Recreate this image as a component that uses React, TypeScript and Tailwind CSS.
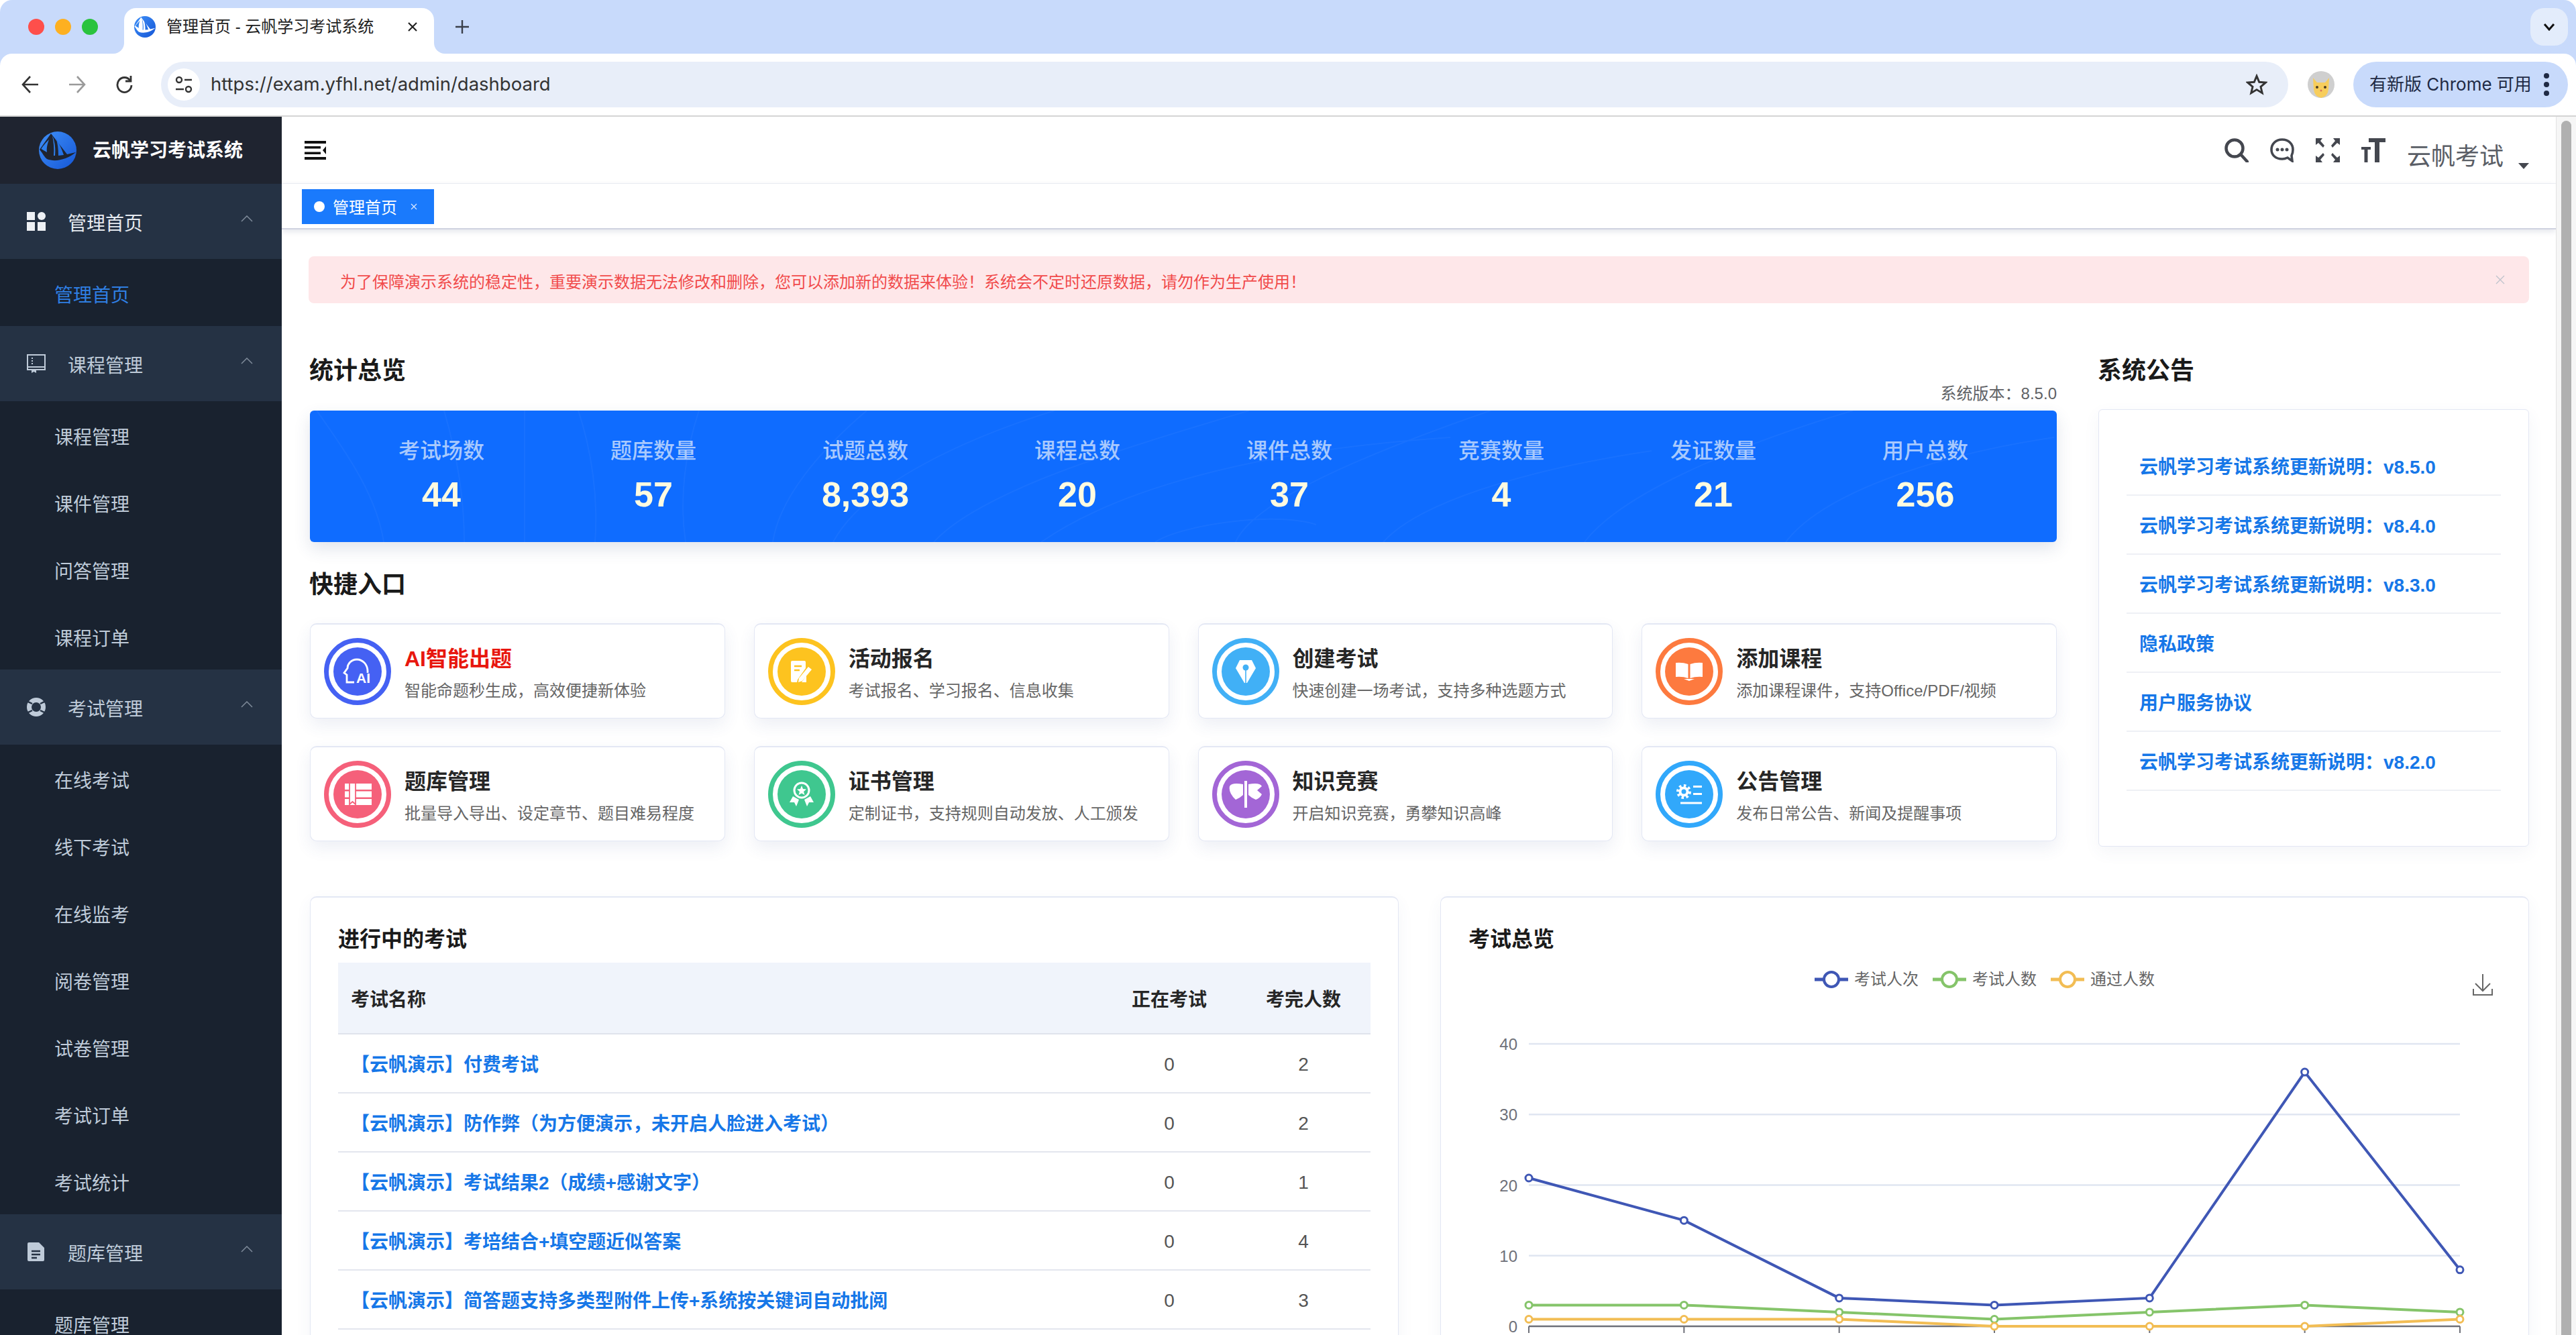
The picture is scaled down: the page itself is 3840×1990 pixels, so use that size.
import { ReactNode } from "react";

const menus = [
  { title: "管理首页", icon: "dash", items: ["管理首页"] },
  { title: "课程管理", icon: "book", items: ["课程管理", "课件管理", "问答管理", "课程订单"] },
  { title: "考试管理", icon: "ring", items: ["在线考试", "线下考试", "在线监考", "阅卷管理", "试卷管理", "考试订单", "考试统计"] },
  { title: "题库管理", icon: "doc", items: ["题库管理"] },
];

const stats = [
  ["考试场数", "44"],
  ["题库数量", "57"],
  ["试题总数", "8,393"],
  ["课程总数", "20"],
  ["课件总数", "37"],
  ["竞赛数量", "4"],
  ["发证数量", "21"],
  ["用户总数", "256"],
];

const notices = [
  "云帆学习考试系统更新说明：v8.5.0",
  "云帆学习考试系统更新说明：v8.4.0",
  "云帆学习考试系统更新说明：v8.3.0",
  "隐私政策",
  "用户服务协议",
  "云帆学习考试系统更新说明：v8.2.0",
];

const exams = [
  ["【云帆演示】付费考试", "0", "2"],
  ["【云帆演示】防作弊（为方便演示，未开启人脸进入考试）", "0", "2"],
  ["【云帆演示】考试结果2（成绩+感谢文字）", "0", "1"],
  ["【云帆演示】考培结合+填空题近似答案", "0", "4"],
  ["【云帆演示】简答题支持多类型附件上传+系统按关键词自动批阅", "0", "3"],
];

function Logo({ size, cut }: { size: number; cut: string }) {
  return (
    <svg width={size} height={size} viewBox="0 0 56 56">
      <defs>
        <linearGradient id="lg" x1="0" y1="0" x2="1" y2="1">
          <stop offset="0" stopColor="#3f90f8" />
          <stop offset="1" stopColor="#1556d6" />
        </linearGradient>
      </defs>
      <circle cx="28" cy="28" r="28" fill="url(#lg)" />
      <path d="M18 3L1 27C6 33 8 38 12 41C24 46 42 42 55 31L42 34Z" fill={cut} />
      <path d="M15 12C9 18 5 23 3.500 26L12 31C11 24 13 18 15 12Z" fill="#2f80ee" />
      <path d="M20 6C24 16 25 26 24 36L22 36C23 26 22 16 20 6Z" fill="#2f80ee" />
      <path d="M25 9C30 17 34 26 37 35L29 36C29 26 28 17 25 9Z" fill="#2572e6" />
    </svg>
  );
}

function MenuIcon({ name }: { name: string }) {
  if (name === "dash")
    return (
      <svg width="28" height="28" viewBox="0 0 28 28" fill="#eef1f5">
        <rect x="0" y="0" width="12" height="12" />
        <circle cx="22" cy="6" r="6" />
        <rect x="0" y="15" width="12" height="13" />
        <rect x="16" y="15" width="12" height="13" />
      </svg>
    );
  if (name === "book")
    return (
      <svg width="28" height="28" viewBox="0 0 28 28" fill="none" stroke="#bfcbd9" strokeWidth="2">
        <path d="M1 1H27V23H1Z" />
        <path d="M1 19H27" />
        <path d="M8 5V16" strokeDasharray="2 2" />
        <path d="M7 23H14V28L10.500 26L7 28Z" fill="#bfcbd9" stroke="none" />
      </svg>
    );
  if (name === "ring")
    return (
      <svg width="28" height="28" viewBox="0 0 28 28" fill="none">
        <circle cx="14" cy="14" r="10.500" stroke="#bfcbd9" strokeWidth="7" />
        <path d="M0 5L8 9M28 5L20 9M0 23L8 19M28 23L20 19" stroke="#253244" strokeWidth="2.500" />
      </svg>
    );
  return (
    <svg width="28" height="28" viewBox="0 0 28 28" fill="#bfcbd9">
      <path d="M3 0H18L26 8V26Q26 28 24 28H3Q1 28 1 26V2Q1 0 3 0Z" />
      <path d="M7 13H20M7 18H20M7 23H15" stroke="#253244" strokeWidth="2.500" />
    </svg>
  );
}

function Caret() {
  return (
    <svg width="18" height="10" viewBox="0 0 18 10" fill="none" stroke="#7f8b9a" strokeWidth="1.500">
      <path d="M1 9L9 1L17 9" />
    </svg>
  );
}

function Sidebar() {
  return (
    <aside className="w-[420px] shrink-0 bg-[#1f2430] overflow-hidden">
      <div className="h-[100px] flex items-center pl-[58px] gap-[24px] bg-[#1f2430]">
        <Logo size={56} cut="#1f2430" />
        <span className="text-[28px] font-semibold text-white leading-none pt-[2px]">云帆学习考试系统</span>
      </div>
      {menus.map((m, i) => (
        <div key={m.title + i}>
          <div className="h-[112px] flex items-center pl-[40px] pr-[43px] bg-[#253244]">
            <MenuIcon name={m.icon} />
            <span className={`ml-[33px] pt-[8px] text-[28px] leading-none ${i === 0 ? "text-[#e6eaf0]" : "text-[#bfcbd9]"}`}>{m.title}</span>
            <span className="ml-auto -mt-[8px] flex">
              <Caret />
            </span>
          </div>
          <div className="bg-[#19222f]">
            {m.items.map((s, j) => (
              <div
                key={s}
                className={`h-[100px] flex items-center pl-[81px] pt-[10px] text-[28px] leading-none ${i === 0 && j === 0 ? "text-[#2f7fe3]" : "text-[#bfcbd9]"}`}
              >
                {s}
              </div>
            ))}
          </div>
        </div>
      ))}
    </aside>
  );
}

function ChromeBar() {
  return (
    <div className="bg-[#c8dafb] rounded-t-[18px]">
      <div className="h-[80px] flex items-end relative">
        <div className="flex items-center gap-[16px] pl-[42px] pr-[39px] h-[80px]">
          <span className="w-[24px] h-[24px] rounded-full bg-[#fe4f4b]" />
          <span className="w-[24px] h-[24px] rounded-full bg-[#fdb021]" />
          <span className="w-[24px] h-[24px] rounded-full bg-[#2ac33e]" />
        </div>
        <div className="relative w-[462px] h-[68px] bg-white rounded-t-[18px] flex items-center pl-[15px]">
          <span className="absolute -left-[16px] bottom-0 w-[16px] h-[16px] bg-white">
            <span className="block w-[16px] h-[16px] bg-[#c8dafb] rounded-br-[16px]" />
          </span>
          <span className="absolute -right-[16px] bottom-0 w-[16px] h-[16px] bg-white">
            <span className="block w-[16px] h-[16px] bg-[#c8dafb] rounded-bl-[16px]" />
          </span>
          <div className="-mt-[12px] flex items-center">
            <Logo size={32} cut="#ffffff" />
            <span className="ml-[16px] text-[24px] leading-none text-[#222] whitespace-pre">管理首页 - 云帆学习考试系统</span>
            <svg className="ml-[50px]" width="16" height="16" viewBox="0 0 16 16" stroke="#222" strokeWidth="2.200">
              <path d="M2 2L14 14M14 2L2 14" />
            </svg>
          </div>
        </div>
        <svg className="absolute left-[679px] top-[30px]" width="20" height="20" viewBox="0 0 20 20" stroke="#3a3f4a" strokeWidth="2.400">
          <path d="M10 0V20M0 10H20" />
        </svg>
        <div className="absolute right-[12px] top-[12px] w-[56px] h-[56px] rounded-[20px] bg-[#e3ecfb] flex items-center justify-center">
          <svg width="18" height="12" viewBox="0 0 18 12" fill="none" stroke="#111" strokeWidth="3">
            <path d="M2 2L9 10L16 2" />
          </svg>
        </div>
      </div>
      <div className="h-[92px] bg-white rounded-t-[18px] flex items-center">
        <div className="w-[240px] shrink-0 flex items-center justify-between pl-[32px] pr-[42px]">
          <svg width="26" height="28" viewBox="0 0 26 28" fill="none" stroke="#333" strokeWidth="2.600">
            <path d="M25 14H2M13 2L2 14L13 26" />
          </svg>
          <svg width="26" height="28" viewBox="0 0 26 28" fill="none" stroke="#9a9a9a" strokeWidth="2.600">
            <path d="M1 14H24M13 2L24 14L13 26" />
          </svg>
          <svg width="26" height="28" viewBox="0 0 26 28" fill="none" stroke="#333" strokeWidth="2.800">
            <path d="M22 8A10.500 11 0 1 0 24 15" />
            <path d="M23 1V9H15" />
          </svg>
        </div>
        <div className="flex-1 h-[68px] rounded-full bg-[#e8eef9] flex items-center pl-[10px] pr-[31px]">
          <div className="w-[48px] h-[48px] rounded-full bg-white flex items-center justify-center">
            <svg width="26" height="26" viewBox="0 0 26 26" fill="none" stroke="#333" strokeWidth="2.400">
              <circle cx="6" cy="6" r="4" />
              <path d="M14 6H25M1 20H13" />
              <circle cx="20" cy="20" r="4" />
            </svg>
          </div>
          <span className="ml-[16px] text-[27.500px] leading-none text-[#333] font-['Inter','Liberation_Sans',sans-serif]">https://exam.yfhl.net/admin/dashboard</span>
          <svg className="ml-auto" width="32" height="32" viewBox="0 0 24 24" fill="none" stroke="#333" strokeWidth="2.200">
            <path d="M12 2.500L14.800 9.200L22 9.800L16.500 14.500L18.200 21.500L12 17.700L5.800 21.500L7.500 14.500L2 9.800L9.200 9.200Z" />
          </svg>
        </div>
        <div className="w-[97px] shrink-0 flex justify-center">
          <svg width="40" height="40" viewBox="0 0 40 40">
            <circle cx="20" cy="20" r="20" fill="#cfcfcf" />
            <path d="M8 10L14 17H26L32 10L31 27Q30 38 20 40Q10 38 9 27Z" fill="#f7cd5c" />
            <circle cx="14" cy="24" r="2" fill="#4a3a20" />
            <circle cx="26" cy="24" r="2" fill="#4a3a20" />
            <circle cx="20" cy="29" r="1.500" fill="#d9775a" />
          </svg>
        </div>
        <div className="w-[320px] h-[68px] shrink-0 mr-[12px] rounded-full bg-[#c8dafb] flex items-center pl-[24px]">
          <span className="text-[26px] leading-none text-[#1f2a44] whitespace-pre font-['Inter','Noto_Sans_CJK_SC',sans-serif]">有新版 Chrome 可用</span>
          <span className="ml-auto mr-[28px] flex flex-col gap-[5px]">
            <i className="block w-[8px] h-[8px] rounded-full bg-[#1f2a44]" />
            <i className="block w-[8px] h-[8px] rounded-full bg-[#1f2a44]" />
            <i className="block w-[8px] h-[8px] rounded-full bg-[#1f2a44]" />
          </span>
        </div>
      </div>
      <div className="h-[2px] bg-[#d4d4d4]" />
    </div>
  );
}

function NavIcons() {
  return (
    <div className="flex items-center gap-[32px]">
      <svg width="36" height="36" viewBox="0 0 36 36" fill="none" stroke="#44474f" strokeWidth="4.500">
        <circle cx="15" cy="15" r="12.500" />
        <path d="M24 24L34 35" strokeLinecap="round" />
      </svg>
      <svg width="36" height="36" viewBox="0 0 36 36" fill="none">
        <path d="M18 2C8 2 2 9 2 17C2 25 8 31 18 31C21 31 24 30 26 29L33 34L32 26C33 24 34 21 34 17C34 9 28 2 18 2Z" stroke="#44474f" strokeWidth="3.600" />
        <circle cx="11" cy="17" r="2.500" fill="#44474f" />
        <circle cx="18" cy="17" r="2.500" fill="#44474f" />
        <circle cx="25" cy="17" r="2.500" fill="#44474f" />
      </svg>
      <svg width="36" height="36" viewBox="0 0 36 36" fill="#44474f">
        <path d="M0 0H10L7 4L13 11L11 14L4 7L0 10Z" />
        <path d="M36 0H26L29 4L23 11L25 14L32 7L36 10Z" />
        <path d="M0 36H10L7 32L13 25L11 22L4 29L0 26Z" />
        <path d="M36 36H26L29 32L23 25L25 22L32 29L36 26Z" />
      </svg>
      <svg width="36" height="36" viewBox="0 0 36 36" fill="#44474f">
        <path d="M11 0H36V6H27V36H20V6H11Z" />
        <path d="M0 13H14V17H9.500V36H4.500V17H0Z" />
      </svg>
    </div>
  );
}

function Navbar() {
  return (
    <>
      <div className="h-[100px] flex items-center pl-[34px] pr-[40px] border-b border-[#eef0f4]">
        <svg width="32" height="28" viewBox="0 0 32 28" fill="#111">
          <rect x="0" y="0" width="32" height="4" />
          <rect x="0" y="8" width="24" height="3.500" />
          <rect x="0" y="16.500" width="24" height="3.500" />
          <rect x="0" y="24" width="32" height="4" />
          <path d="M32 8V20L27 14Z" />
        </svg>
        <div className="ml-auto flex items-center">
          <NavIcons />
          <span className="ml-[32px] text-[36px] leading-none text-[#5a5e66] mt-[20px]">云帆考试</span>
          <svg className="ml-[22px] mt-[47px]" width="16" height="9" viewBox="0 0 16 9" fill="#44474f">
            <path d="M0 0H16L8 9Z" />
          </svg>
        </div>
      </div>
      <div className="h-[68px] relative z-10 flex items-center pl-[30px] pt-[2px] border-b-2 border-[#d0d3e0] shadow-[0_3px_8px_rgba(60,70,110,0.14)] bg-white">
        <div className="h-[52px] w-[197px] bg-[#1a7afc] flex items-center pl-[18px] text-white">
          <span className="w-[16px] h-[16px] rounded-full bg-white" />
          <span className="ml-[12px] pt-[4px] text-[24px] leading-none">管理首页</span>
          <svg className="ml-[20px]" width="10" height="10" viewBox="0 0 10 10" stroke="#dbe9ff" strokeWidth="1.200">
            <path d="M1 1L9 9M9 1L1 9" />
          </svg>
        </div>
      </div>
    </>
  );
}

function Heading({ children }: { children: ReactNode }) {
  return <h2 className="h-[44px] -ml-[1px] pt-[6px] flex items-center text-[36px] font-bold leading-none text-[#1a1a1a]">{children}</h2>;
}

function StatsCard() {
  return (
    <div className="relative h-[196px] rounded-[6px] bg-[#0f6cff] overflow-hidden grid grid-cols-8 px-[38px] pt-[36px] shadow-[0_10px_24px_rgba(50,70,120,0.14)]">
      <svg className="absolute inset-0" width="2606" height="196" viewBox="0 0 2606 196" fill="none" stroke="#ffffff" strokeOpacity="0.04" strokeWidth="2">
        <path d="M10 0C60 70 100 130 110 196M200 0C220 70 230 130 230 196M320 0V196M400 0C420 60 430 130 425 196M580 0C560 60 550 130 560 196M830 0C760 60 700 130 690 196M1110 0C950 50 820 120 780 196M1400 0C1200 60 1000 120 930 196M1700 40C1400 60 1200 120 1090 196M1500 170C1440 150 1300 170 1260 196M1760 0C1500 90 1400 150 1380 196M2000 60C1800 90 1650 140 1600 196M2300 0C2100 60 1950 130 1900 196M2600 40C2400 70 2250 130 2200 196" />
      </svg>
      {stats.map(([label, value]) => (
        <div key={label} className="relative text-center">
          <div className="h-[44px] pt-[4px] flex items-center justify-center text-[32px] leading-none text-[#a8c9fd] font-medium">{label}</div>
          <div className="mt-[15px] h-[60px] flex items-center justify-center text-[52px] leading-none font-bold text-[#fffbe0]">{value}</div>
        </div>
      ))}
    </div>
  );
}

const shortcuts = [
  { title: "AI智能出题", desc: "智能命题秒生成，高效便捷新体验", ring: "border-[#4561f3]", disc: "bg-[#4561f3]", icon: "ai" },
  { title: "活动报名", desc: "考试报名、学习报名、信息收集", ring: "border-[#fdc31f]", disc: "bg-[#fdc31f]", icon: "form" },
  { title: "创建考试", desc: "快速创建一场考试，支持多种选题方式", ring: "border-[#41b0f6]", disc: "bg-[#41b0f6]", icon: "pen" },
  { title: "添加课程", desc: "添加课程课件，支持Office/PDF/视频", ring: "border-[#fd7a3f]", disc: "bg-[#fd7a3f]", icon: "open" },
  { title: "题库管理", desc: "批量导入导出、设定章节、题目难易程度", ring: "border-[#f5607a]", disc: "bg-[#f5607a]", icon: "stack" },
  { title: "证书管理", desc: "定制证书，支持规则自动发放、人工颁发", ring: "border-[#3fc78f]", disc: "bg-[#3fc78f]", icon: "medal" },
  { title: "知识竞赛", desc: "开启知识竞赛，勇攀知识高峰", ring: "border-[#a366d6]", disc: "bg-[#a366d6]", icon: "axe" },
  { title: "公告管理", desc: "发布日常公告、新闻及提醒事项", ring: "border-[#31a8fb]", disc: "bg-[#31a8fb]", icon: "gear" },
];

function ShortcutGlyph({ name, tint }: { name: string; tint: string }) {
  if (name === "ai")
    return (
      <svg width="45" height="40" viewBox="0 0 45 40" fill="none" stroke="#fff" strokeWidth="2.800">
        <path d="M37 22C38 9 29 2 21 2C12 2 7 9 7 15L2 22L6 25V36H17" />
        <text x="20" y="37" fontSize="21" fontWeight="700" fill="#fff" stroke="none" fontFamily="Liberation Sans">AI</text>
      </svg>
    );
  if (name === "form")
    return (
      <svg width="32" height="32" viewBox="0 0 32 32" fill="#fff">
        <path d="M2 0H20Q22 0 22 2V11L10 28L9 32H2Q0 32 0 30V2Q0 0 2 0Z" />
        <path d="M26 9L31 13L17 30L11 32L12 26Z" />
        <path d="M23 22V32H16Z" />
        <path d="M5 8H16M5 14H13" stroke={tint} strokeWidth="2.500" />
      </svg>
    );
  if (name === "pen")
    return (
      <svg width="30" height="34" viewBox="0 0 30 34" fill="#fff">
        <path d="M6 0H24L30 12L17 34H13L0 12Z" />
        <circle cx="15" cy="11" r="4.500" fill={tint} />
        <path d="M15 15V34" stroke={tint} strokeWidth="1.600" />
      </svg>
    );
  if (name === "open")
    return (
      <svg width="40" height="28" viewBox="0 0 40 28" fill="#fff">
        <path d="M0 1Q10 0 18.500 3V24Q10 21 0 22Z" />
        <path d="M40 1Q30 0 21.500 3V24Q30 21 40 22Z" />
        <path d="M12 25H28L20 28Z" />
      </svg>
    );
  if (name === "stack")
    return (
      <svg width="41" height="34" viewBox="0 0 41 34" fill="#fff">
        <path d="M1 1H41V10H1Z" />
        <path d="M1 12.500H41V21.500H1Z" />
        <path d="M1 24H41V33H1Z" />
        <path d="M8 0H17V32L12.500 28L8 32Z" stroke={tint} strokeWidth="1.800" />
      </svg>
    );
  if (name === "medal")
    return (
      <svg width="38" height="38" viewBox="0 0 38 38" fill="none">
        <circle cx="19" cy="13" r="11" stroke="#fff" strokeWidth="3" />
        <path d="M19 6L21 11L26 11.500L22 15L23.500 20L19 17.500L14.500 20L16 15L12 11.500L17 11Z" fill="#fff" />
        <path d="M6 22L1 31L8 31L11 37L15 27Z M32 22L37 31L30 31L27 37L23 27Z" fill="#fff" />
      </svg>
    );
  if (name === "axe")
    return (
      <svg width="50" height="40" viewBox="0 0 50 40" fill="#fff">
        <path d="M21 5Q4 2 1 8Q-1 18 10 28Q17 25 21 21Z" />
        <path d="M29 5Q46 2 49 8L42 14L49 20Q46 26 40 28Q33 25 29 21Z" />
        <path d="M23 0H27V40H23Z" />
      </svg>
    );
  return (
    <svg width="38" height="30" viewBox="0 0 38 30" fill="#fff">
      <circle cx="11" cy="11" r="9" stroke="#fff" strokeWidth="4" strokeDasharray="3.500 3.500" fill="none" />
      <circle cx="11" cy="11" r="7.500" />
      <circle cx="11" cy="11" r="3.500" fill={tint} />
      <path d="M25 2H38V5H25ZM25 13H38V16H25ZM6 26.500H38V29.500H6Z" />
    </svg>
  );
}

const tints: Record<string, string> = {
  form: "#fdc31f",
  pen: "#41b0f6",
  stack: "#f5607a",
  gear: "#31a8fb",
};

function Shortcuts() {
  return (
    <div className="grid grid-cols-4 gap-x-[43px] gap-y-[41px]">
      {shortcuts.map((s, i) => (
        <div key={s.title} className="h-[142px] rounded-[10px] bg-white border border-[#e3e7f4] border-t-2 flex items-center pl-[20px] shadow-[0_10px_24px_rgba(60,80,140,0.09)]">
          <div className={`w-[100px] h-[100px] shrink-0 rounded-full border-[7px] ${s.ring} p-[7px]`}>
            <div className={`w-full h-full rounded-full ${s.disc} flex items-center justify-center`}>
              <ShortcutGlyph name={s.icon} tint={tints[s.icon] ?? "#fff"} />
            </div>
          </div>
          <div className="ml-[20px] pt-[6px]">
            <div className={`text-[32px] font-bold leading-none ${i === 0 ? "text-[#e8170e]" : "text-[#262626]"}`}>{s.title}</div>
            <div className="mt-[20px] text-[24px] leading-none text-[#666] whitespace-nowrap">{s.desc}</div>
          </div>
        </div>
      ))}
    </div>
  );
}

function Notices() {
  return (
    <div className="mt-[38px] h-[652px] rounded-[6px] border border-[#e3e7f4] bg-white px-[41px] pt-[40px] shadow-[0_8px_24px_rgba(60,80,140,0.06)]">
      {notices.map((n, i) => (
        <div key={n + i} className="h-[88px] flex items-center pl-[19px] pt-[5px] border-b-2 border-[#eef0f5] text-[28px] leading-none font-semibold text-[#1677e8]">
          {n}
        </div>
      ))}
    </div>
  );
}

function ExamTable() {
  return (
    <div className="rounded-[10px] border border-[#e3e7f4] border-t-2 bg-white px-[41px] pt-[37px] min-h-[700px] shadow-[0_8px_24px_rgba(60,80,140,0.06)]">
      <div className="h-[40px] pt-[10px] flex items-center text-[32px] font-bold leading-none text-[#1a1a1a]">进行中的考试</div>
      <div className="mt-[20px] h-[107px] pt-[6px] flex items-center bg-[#f0f4fb] border-b-2 border-[#dfe3ec] text-[28px] font-bold leading-none text-[#262626]">
        <div className="flex-1 pl-[19px]">考试名称</div>
        <div className="w-[200px] text-center">正在考试</div>
        <div className="w-[200px] text-center">考完人数</div>
      </div>
      {exams.map(([name, going, done]) => (
        <div key={name} className="h-[88px] pt-[4px] flex items-center border-b-2 border-[#e3e6ee] text-[28px] leading-none text-[#555]">
          <div className="flex-1 pl-[19px] pt-[2px] font-semibold text-[#1677e8]">{name}</div>
          <div className="w-[200px] text-center">{going}</div>
          <div className="w-[200px] text-center">{done}</div>
        </div>
      ))}
    </div>
  );
}

const series = [
  { color: "#3f57b5", data: [21, 15, 4, 3, 4, 36, 8] },
  { color: "#85c46a", data: [3, 3, 2, 1, 2, 3, 2] },
  { color: "#f2bd54", data: [1, 1, 1, 0, 0, 0, 1] },
];
const legend = [
  ["考试人次", "#3f57b5"],
  ["考试人数", "#85c46a"],
  ["通过人数", "#f2bd54"],
];

function ExamChart() {
  const px = (i: number) => 131 + i * 231.33;
  const py = (v: number) => 447 - v * 10.525;
  return (
    <div className="rounded-[10px] border border-[#e3e7f4] border-t-2 bg-white pt-[37px] min-h-[700px] overflow-hidden relative shadow-[0_8px_24px_rgba(60,80,140,0.06)]">
      <div className="h-[40px] pt-[10px] flex items-center pl-[41px] text-[32px] font-bold leading-none text-[#1a1a1a]">考试总览</div>
      <div className="mt-[30px] h-[30px] flex items-center justify-center gap-[21px]">
        {legend.map(([label, color]) => (
          <div key={label} className="flex items-center gap-[9px]">
            <svg width="50" height="28" viewBox="0 0 50 28" fill="none">
              <path d="M0 14H50" stroke={color} strokeWidth="5" />
              <circle cx="25" cy="14" r="11" fill="#fff" stroke={color} strokeWidth="4" />
            </svg>
            <span className="text-[24px] leading-none text-[#666]">{label}</span>
          </div>
        ))}
      </div>
      <svg className="absolute top-[114px] right-[53px]" width="30" height="32" viewBox="0 0 30 32" fill="none" stroke="#666" strokeWidth="2">
        <path d="M15 0V24M4 14L15 25L26 14M1 22V31H29V22" />
      </svg>
      <svg className="mt-[55px] block" width="1621" height="470" viewBox="0 0 1621 470">
        {[40, 30, 20, 10].map((v) => (
          <path key={v} d={`M131 ${py(v)}H1519`} stroke="#e0e6f1" strokeWidth="2.500" />
        ))}
        {[40, 30, 20, 10, 0].map((v) => (
          <text key={v} x="114" y={py(v) + 9} textAnchor="end" fontSize="24" fill="#6e7079" fontFamily="Liberation Sans">
            {v}
          </text>
        ))}
        <path d="M131 447H1519" stroke="#6e7079" strokeWidth="2.500" />
        {[0, 1, 2, 3, 4, 5, 6].map((i) => (
          <path key={i} d={`M${px(i)} 447V457`} stroke="#6e7079" strokeWidth="2" />
        ))}
        {series.map((s) => (
          <g key={s.color}>
            <polyline points={s.data.map((v, i) => `${px(i)},${py(v)}`).join(" ")} fill="none" stroke={s.color} strokeWidth="4" />
            {s.data.map((v, i) => (
              <circle key={i} cx={px(i)} cy={py(v)} r="5" fill="#fff" stroke={s.color} strokeWidth="3" />
            ))}
          </g>
        ))}
      </svg>
    </div>
  );
}

export default function App() {
  return (
    <div className="w-[3840px] h-[1990px] overflow-hidden bg-white flex flex-col font-['Liberation_Sans','Noto_Sans_CJK_SC',sans-serif]">
      <ChromeBar />
      <div className="flex-1 min-h-0 flex">
        <Sidebar />
        <main className="flex-1 min-w-0 overflow-hidden">
          <Navbar />
          <div className="pl-[42px] pr-[40px] pt-[40px]">
            <div className="-ml-[2px] h-[70px] rounded-[8px] bg-[#fee7e9] flex items-center pl-[47px] pr-[36px] pt-[8px] text-[24px] leading-none text-[#f14b4b]">
              为了保障演示系统的稳定性，重要演示数据无法修改和删除，您可以添加新的数据来体验！系统会不定时还原数据，请勿作为生产使用！
              <svg className="ml-auto -mt-[8px]" width="14" height="14" viewBox="0 0 14 14" stroke="#c0c4cc" strokeWidth="1.400">
                <path d="M1 1L13 13M13 1L1 13" />
              </svg>
            </div>
            <div className="mt-[76px] grid grid-cols-[2604px_642px] gap-x-[62px]">
              <div>
                <Heading>统计总览</Heading>
                <div className="h-[40px] flex justify-end items-center pb-[10px] text-[24px] leading-none text-[#606266]">系统版本：8.5.0</div>
                <StatsCard />
                <div className="mt-[39px]">
                  <Heading>快捷入口</Heading>
                </div>
                <div className="mt-[38px]">
                  <Shortcuts />
                </div>
              </div>
              <div>
                <Heading>系统公告</Heading>
                <Notices />
              </div>
            </div>
            <div className="mt-[74px] grid grid-cols-2 gap-x-[62px]">
              <ExamTable />
              <ExamChart />
            </div>
          </div>
        </main>
        <div className="w-[30px] shrink-0 bg-[#f6f6f6] border-l border-[#e2e2e2] pl-[7px] pt-[6px]">
          <div className="w-[15px] h-full rounded-t-full bg-[#b0b0b0]" />
        </div>
      </div>
    </div>
  );
}
